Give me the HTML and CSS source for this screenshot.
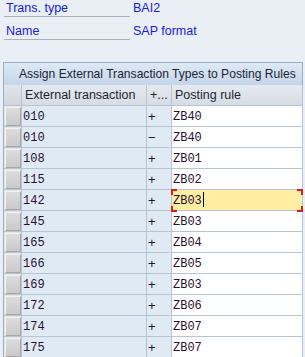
FILE: index.html
```html
<!DOCTYPE html>
<html lang="en">
<head>
  <meta charset="UTF-8">
  <title>Assign External Transaction Types</title>
  <link rel="stylesheet" href="styles.css">
</head>
<body>
  <div class="fields">
    <div class="field">
      <span class="label">Trans. type</span>
      <span class="value">BAI2</span>
    </div>
    <div class="field">
      <span class="label">Name</span>
      <span class="value">SAP format</span>
    </div>
  </div>

  <div class="frame">
    <div class="title">Assign External Transaction Types to Posting Rules</div>
    <div class="grid">
      <div class="hd sel"></div>
      <div class="hd">External transaction</div>
      <div class="hd">+...</div>
      <div class="hd">Posting rule</div>

      <div class="sel"><span class="btn"></span></div><div class="cell">010</div><div class="cell sign">+</div><div class="cell edit">ZB40</div>
      <div class="sel"><span class="btn"></span></div><div class="cell">010</div><div class="cell sign">&minus;</div><div class="cell edit">ZB40</div>
      <div class="sel"><span class="btn"></span></div><div class="cell">108</div><div class="cell sign">+</div><div class="cell edit">ZB01</div>
      <div class="sel"><span class="btn"></span></div><div class="cell">115</div><div class="cell sign">+</div><div class="cell edit">ZB02</div>
      <div class="sel"><span class="btn"></span></div><div class="cell">142</div><div class="cell sign">+</div><div class="cell edit focus">ZB03<span class="caret"></span><i class="c tl"></i><i class="c tr"></i><i class="c bl"></i><i class="c br"></i></div>
      <div class="sel"><span class="btn"></span></div><div class="cell">145</div><div class="cell sign">+</div><div class="cell edit">ZB03</div>
      <div class="sel"><span class="btn"></span></div><div class="cell">165</div><div class="cell sign">+</div><div class="cell edit">ZB04</div>
      <div class="sel"><span class="btn"></span></div><div class="cell">166</div><div class="cell sign">+</div><div class="cell edit">ZB05</div>
      <div class="sel"><span class="btn"></span></div><div class="cell">169</div><div class="cell sign">+</div><div class="cell edit">ZB03</div>
      <div class="sel"><span class="btn"></span></div><div class="cell">172</div><div class="cell sign">+</div><div class="cell edit">ZB06</div>
      <div class="sel"><span class="btn"></span></div><div class="cell">174</div><div class="cell sign">+</div><div class="cell edit">ZB07</div>
      <div class="sel"><span class="btn"></span></div><div class="cell">175</div><div class="cell sign">+</div><div class="cell edit">ZB07</div>
    </div>
  </div>
</body>
</html>
```

FILE: styles.css
```css
body {
  margin: 0;
  background-color: #e9eff5;
  font-family: "Liberation Sans", Arial, sans-serif;
  font-size: 12px;
  overflow: hidden;
}

.fields {
  padding-left: 4px;
  padding-bottom: 22px;
}

.field {
  display: flex;
  line-height: 16px;
  margin-bottom: 6px;
  color: #1a1ae6;
  font-size: 12.5px;
}

.field:last-child {
  margin-bottom: 0;
}

.label {
  width: 124px;
  padding-left: 2px;
  border-bottom: 1px solid #a9b1ba;
}

.value {
  padding-left: 3px;
}

.frame {
  margin-left: 3px;
  width: 299px;
  border-left: 1px solid #9eadbd;
  border-top: 1px solid #9eadbd;
}

.title {
  height: 22px;
  line-height: 22px;
  padding-left: 15px;
  font-size: 12.1px;
  color: #1c2430;
  background: linear-gradient(#dde9f5, #c4d6ea);
  border-right: 1px solid #9eadbd;
  white-space: nowrap;
  overflow: hidden;
}

.grid {
  display: grid;
  grid-template-columns: 18px 125px 25px 131px;
  grid-auto-rows: 21px;
}

.grid > div {
  border-right: 1px solid #b7c4d2;
  border-bottom: 1px solid #b7c4d2;
}

.hd {
  background: linear-gradient(#e6eaef, #d5dce4);
  line-height: 20px;
  padding-left: 3px;
  font-size: 12.5px;
  color: #1c2430;
  white-space: nowrap;
  overflow: hidden;
}

.hd.sel {
  padding: 0;
  background: linear-gradient(#e2e6ea, #d0d6dc);
}

.sel {
  background-color: #e3e6ea;
  padding: 1px 0 0 1px;
}

.btn {
  display: block;
  width: 16px;
  height: 19px;
  box-sizing: border-box;
  border-top: 1px solid #f2f2f2;
  border-left: 1px solid #f2f2f2;
  border-right: 1px solid #a8a8a8;
  border-bottom: 1px solid #a8a8a8;
  background: linear-gradient(#dcdcdc, #cacaca);
}

.cell {
  background-color: #dfeaf5;
  font-family: "Liberation Mono", "Courier New", monospace;
  font-size: 12px;
  line-height: 18px;
  padding-top: 2px;
  padding-left: 1px;
  color: #2a1030;
}

.sign {
  font-family: "Liberation Sans", Arial, sans-serif;
  font-size: 13px;
  padding-left: 1px;
}

.edit {
  background-color: #ffffff;
}

.focus {
  position: relative;
  background-color: #fdeea3;
}

.caret {
  display: inline-block;
  width: 1px;
  height: 15px;
  margin-left: 1px;
  vertical-align: -3px;
  background-color: #000000;
}

.c {
  position: absolute;
  width: 4px;
  height: 4px;
  border-color: #e01b1b;
  border-style: solid;
  border-width: 0;
}

.tl { left: -1px; top: -1px; border-left-width: 2px; border-top-width: 2px; }
.tr { right: -1px; top: -1px; border-right-width: 2px; border-top-width: 2px; }
.bl { left: -1px; bottom: -2px; border-left-width: 2px; border-bottom-width: 2px; }
.br { right: -1px; bottom: -2px; border-right-width: 2px; border-bottom-width: 2px; }
```
